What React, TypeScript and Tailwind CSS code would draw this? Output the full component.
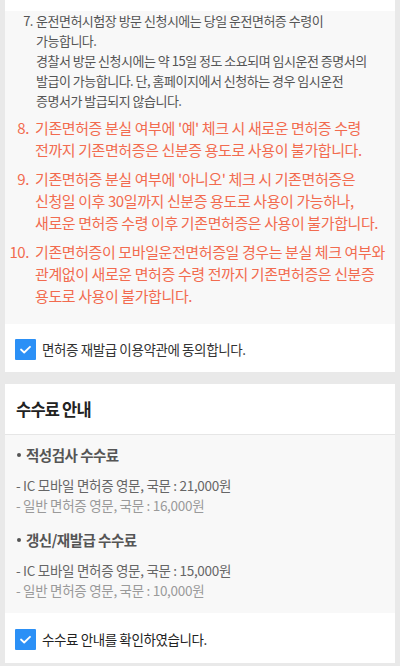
import React from "react";

const notices = [
  {
    no: "8.",
    lines: [
      "기존면허증 분실 여부에 '예' 체크 시 새로운 면허증 수령",
      "전까지 기존면허증은 신분증 용도로 사용이 불가합니다.",
    ],
  },
  {
    no: "9.",
    lines: [
      "기존면허증 분실 여부에 '아니오' 체크 시 기존면허증은",
      "신청일 이후 30일까지 신분증 용도로 사용이 가능하나,",
      "새로운 면허증 수령 이후 기존면허증은 사용이 불가합니다.",
    ],
  },
  {
    no: "10.",
    lines: [
      "기존면허증이 모바일운전면허증일 경우는 분실 체크 여부와",
      "관계없이 새로운 면허증 수령 전까지 기존면허증은 신분증",
      "용도로 사용이 불가합니다.",
    ],
  },
];

const fees = [
  {
    title: "적성검사 수수료",
    ic: "21,000원",
    normal: "16,000원",
  },
  {
    title: "갱신/재발급 수수료",
    ic: "15,000원",
    normal: "10,000원",
  },
];

function CheckBox() {
  return (
    <span className="flex h-[21px] w-[21px] shrink-0 items-center justify-center rounded-[1px] bg-[#2b90f6]">
      <svg width="21" height="21" viewBox="0 0 21 21" fill="none">
        <polyline
          points="6,10.5 9.2,13.5 15,7.8"
          stroke="white"
          strokeWidth="1.8"
          strokeLinecap="round"
          strokeLinejoin="round"
        />
      </svg>
    </span>
  );
}

export default function App() {
  return (
    <div className="h-[666px] w-[400px] overflow-hidden bg-[#e9e9e9] px-[5px] font-['Noto_Sans_CJK_KR',sans-serif]">
      {/* Notice card */}
      <div className="bg-white pt-[12px]">
        <div className="bg-[#f8f8f8] pb-[17px]">
          <div className="-mt-px mb-[6px] flex text-[13px] leading-[20px] tracking-[-0.5px] text-[#555]">
            <span className="w-[28px] shrink-0 text-right">7.</span>
            <div className="ml-[3px] whitespace-nowrap">
              <div>운전면허시험장 방문 신청시에는 당일 운전면허증 수령이</div>
              <div>가능합니다.</div>
              <div>경찰서 방문 신청시에는 약 15일 정도 소요되며 임시운전 증명서의</div>
              <div>발급이 가능합니다. 단, 홈페이지에서 신청하는 경우 임시운전</div>
              <div>증명서가 발급되지 않습니다.</div>
            </div>
          </div>
          {notices.map((n, i) => (
            <div
              key={n.no}
              className={`flex text-[15px] leading-[22px] tracking-[-0.4px] text-[#f26b4f] ${
                i < notices.length - 1 ? "mb-[7px]" : ""
              }`}
            >
              <span className="w-[24px] shrink-0 text-right">{n.no}</span>
              <div className="ml-[6px] whitespace-nowrap">
                {n.lines.map((l) => (
                  <div key={l}>{l}</div>
                ))}
              </div>
            </div>
          ))}
        </div>
        <label className="flex h-[48px] items-center gap-[6px] pl-[10px] pt-[2px]">
          <CheckBox />
          <span className="text-[13.5px] tracking-[-0.4px] text-[#333]">
            면허증 재발급 이용약관에 동의합니다.
          </span>
        </label>
      </div>

      {/* Fee card */}
      <div className="mt-[12px] bg-white">
        <div className="flex h-[51px] items-center border-b border-[#e6e6e6] pl-[11px]">
          <h2 className="text-[16.5px] font-bold tracking-[-0.8px] text-[#222]">
            수수료 안내
          </h2>
        </div>
        <div className="bg-[#f8f8f8] pb-[13px] pl-[11px] pt-[10px]">
          {fees.map((f, i) => (
            <div key={f.title} className={i > 0 ? "mt-[15px]" : ""}>
              <div className="mb-[10px] flex items-center pl-[1px] text-[14.5px] font-bold leading-[20px] tracking-[-0.5px] text-[#555]">
                <span className="mr-[5px] h-[4px] w-[4px] rounded-full bg-[#555]" />
                {f.title}
              </div>
              <div className="text-[13.5px] leading-[20px] tracking-[-0.3px]">
                <div className="text-[#666]">- IC 모바일 면허증 영문, 국문 : {f.ic}</div>
                <div className="text-[#9a9a9a]">- 일반 면허증 영문, 국문 : {f.normal}</div>
              </div>
            </div>
          ))}
        </div>
        <label className="flex h-[50px] items-center gap-[6px] pl-[10px] pt-[3px]">
          <CheckBox />
          <span className="text-[13.5px] tracking-[-0.4px] text-[#222]">
            수수료 안내를 확인하였습니다.
          </span>
        </label>
      </div>
    </div>
  );
}
